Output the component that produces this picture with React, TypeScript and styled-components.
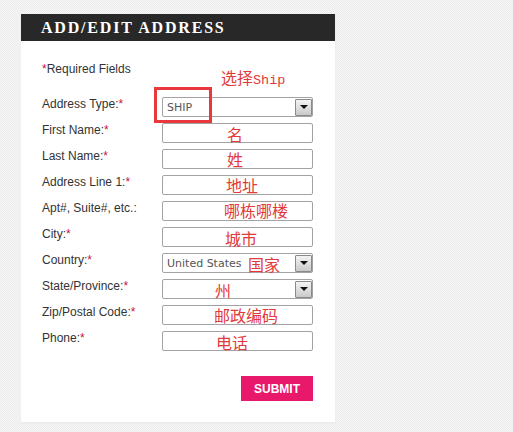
import styled, { createGlobalStyle } from 'styled-components';

const GlobalStyle = createGlobalStyle`
  html, body {
    margin: 0;
    padding: 0;
  }
  body {
    background-color: #f2f2f2;
    background-image: repeating-conic-gradient(#f6f6f6 0 25%, #ececec 0 50%);
    background-size: 2px 2px;
    font-family: 'Liberation Sans', Arial, sans-serif;
  }
`;

const Page = styled.div`
  padding: 14px 0 0 21px;
  min-height: 432px;
  box-sizing: border-box;
`;

const Panel = styled.div`
  width: 314px;
  background: #ffffff;
  box-shadow: 0 1px 2px rgba(0, 0, 0, 0.04);
`;

const Title = styled.h2`
  margin: 0;
  height: 27px;
  padding-left: 20px;
  background: #282828;
  color: #ffffff;
  font-family: 'Liberation Serif', 'Times New Roman', serif;
  font-weight: bold;
  font-size: 16px;
  line-height: 27px;
  letter-spacing: 1.8px;
`;

const Body = styled.form`
  padding: 21px 22px 21px 21px;
  display: flex;
  flex-direction: column;
`;

const Required = styled.p`
  margin: 0 0 21px;
  font-size: 12px;
  line-height: 14px;
  color: #333;
`;

const Star = styled.span`
  color: #cc1144;
`;

const Row = styled.div`
  position: relative;
  display: grid;
  grid-template-columns: 120px 151px;
  height: 20px;
  margin-bottom: 6px;
`;

const Label = styled.label`
  font-size: 12px;
  line-height: 14px;
  color: #333;
  white-space: nowrap;
`;

const TextBox = styled.div`
  box-sizing: border-box;
  height: 20px;
  border: 1px solid #a3a3a3;
  border-radius: 2px;
  background: #fff;
`;

const SelectBox = styled.div`
  box-sizing: border-box;
  height: 20px;
  border: 1px solid #a3a3a3;
  border-radius: 2px;
  background: #fff;
  display: flex;
  align-items: center;
  justify-content: space-between;
  padding: 0 0 0 4px;
`;

const SelectValue = styled.span`
  font-family: 'DejaVu Sans', Verdana, sans-serif;
  font-size: 11px;
  color: #555;
  line-height: 18px;
  padding-top: 1px;
`;

const ArrowButton = styled.span`
  box-sizing: border-box;
  width: 17px;
  height: 17px;
  border: 1px solid #8a8a8a;
  border-radius: 1px;
  background: linear-gradient(#f4f4f4, #c9c9c9);
  display: flex;
  align-items: center;
  justify-content: center;

  &::after {
    content: '';
    width: 0;
    height: 0;
    border-left: 4px solid transparent;
    border-right: 4px solid transparent;
    border-top: 4px solid #111;
  }
`;

const Note = styled.span<{ $left: number; $top?: number }>`
  position: absolute;
  left: ${(p) => p.$left}px;
  top: ${(p) => (p.$top ?? 2)}px;
  font-family: 'Noto Sans CJK SC', sans-serif;
  font-size: 16px;
  line-height: 16px;
  color: #e23a3a;
  white-space: nowrap;
  pointer-events: none;
`;

const Mono = styled.span`
  font-family: 'Liberation Mono', 'Courier New', monospace;
  font-size: 13.5px;
`;

const Highlight = styled.span`
  position: absolute;
  left: 112px;
  top: -10px;
  width: 58px;
  height: 36px;
  box-sizing: border-box;
  border: 3px solid #e8383d;
  pointer-events: none;
`;

const Actions = styled.div`
  display: flex;
  justify-content: flex-end;
  margin-top: 19px;
`;

const Submit = styled.button`
  width: 72px;
  height: 25px;
  border: 0;
  padding: 0;
  background: #e8196b;
  color: #fff;
  font-family: 'Liberation Sans', Arial, sans-serif;
  font-weight: bold;
  font-size: 12px;
  cursor: pointer;
`;

type Field = {
  label: string;
  required: boolean;
  select?: string;
  note: string;
  left: number;
  top?: number;
};

const fields: Field[] = [
  { label: 'First Name:', required: true, note: '名', left: 185, top: 3 },
  { label: 'Last Name:', required: true, note: '姓', left: 185 },
  { label: 'Address Line 1:', required: true, note: '地址', left: 184 },
  { label: 'Apt#, Suite#, etc.:', required: false, note: '哪栋哪楼', left: 182, top: 1 },
  { label: 'City:', required: true, note: '城市', left: 183, top: 3 },
  { label: 'Country:', required: true, select: 'United States', note: '国家', left: 206, top: 3 },
  { label: 'State/Province:', required: true, select: '', note: '州', left: 173, top: 3 },
  { label: 'Zip/Postal Code:', required: true, note: '邮政编码', left: 172 },
  { label: 'Phone:', required: true, note: '电话', left: 174, top: 3 },
];

export default function App() {
  return (
    <>
      <GlobalStyle />
      <Page>
        <Panel>
          <Title>ADD/EDIT ADDRESS</Title>
          <Body onSubmit={(e) => e.preventDefault()}>
            <Required>
              <Star>*</Star>Required Fields
            </Required>

            <Row>
              <Label>
                Address Type:<Star>*</Star>
              </Label>
              <SelectBox>
                <SelectValue>SHIP</SelectValue>
                <ArrowButton />
              </SelectBox>
              <Note $left={179} $top={-28}>
                选择<Mono>Ship</Mono>
              </Note>
              <Highlight />
            </Row>

            {fields.map((f) => (
              <Row key={f.label}>
                <Label>
                  {f.label}
                  {f.required && <Star>*</Star>}
                </Label>
                {f.select !== undefined ? (
                  <SelectBox>
                    <SelectValue>{f.select}</SelectValue>
                    <ArrowButton />
                  </SelectBox>
                ) : (
                  <TextBox />
                )}
                <Note $left={f.left} $top={f.top}>
                  {f.note}
                </Note>
              </Row>
            ))}

            <Actions>
              <Submit type="submit">SUBMIT</Submit>
            </Actions>
          </Body>
        </Panel>
      </Page>
    </>
  );
}
